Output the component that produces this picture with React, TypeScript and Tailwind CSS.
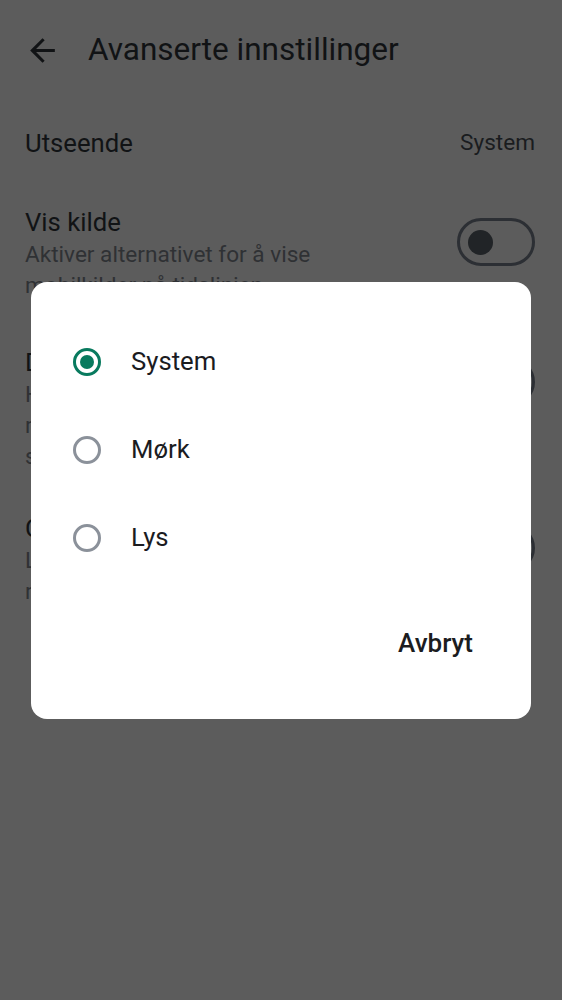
import React from 'react';

interface SettingItem {
  title: string;
  lines: string[];
  top: string;
}

const items: SettingItem[] = [
  {
    title: 'Vis kilde',
    lines: ['Aktiver alternativet for å vise', 'mobilkilder på tidslinjen'],
    top: 'mt-[21px]',
  },
  {
    title: 'Dobbel bekreftelse',
    lines: ['Hvis aktivert, må du bekrefte', 'registreringer før de lagres', 'side om side med tidslinjen'],
    top: 'mt-[46px]',
  },
  {
    title: 'Crash-rapporter',
    lines: ['La appen sende anonym bruk', 'rapporter til utviklerne'],
    top: 'mt-[41px]',
  },
];

const options = ['System', 'Mørk', 'Lys'];

function Toggle() {
  return (
    <div className="mt-[11px] flex h-[48px] w-[78px] shrink-0 items-center rounded-full border-[3px] border-[#2c2f34] pl-[8px]">
      <div className="h-[25px] w-[25px] rounded-full bg-[#212427]" />
    </div>
  );
}

function Radio({ checked }: { checked: boolean }) {
  return (
    <div
      className={`flex h-[28px] w-[28px] shrink-0 items-center justify-center rounded-full border-[3px] ${
        checked ? 'border-[#087a5e]' : 'border-[#8b919a]'
      }`}
    >
      {checked && <div className="h-[14px] w-[14px] rounded-full bg-[#087a5e]" />}
    </div>
  );
}

export default function App() {
  return (
    <div className="relative h-[1000px] overflow-hidden bg-[#5c5c5c] font-['Roboto',sans-serif] text-[#111315]">
      <header className="flex h-[100px] items-center gap-[27px] pl-[24px]">
        <svg width="37" height="37" viewBox="0 0 24 24" fill="#111315">
          <path d="M20 11H7.83l5.59-5.59L12 4l-8 8 8 8 1.41-1.41L7.83 13H20v-2z" />
        </svg>
        <h1 className="text-[31.5px] leading-none">Avanserte innstillinger</h1>
      </header>

      <div className="flex h-[86px] items-center justify-between pl-[25px] pr-[27px]">
        <span className="text-[25.7px]">Utseende</span>
        <span className="text-[22.6px] text-[#1a1c1f]">System</span>
      </div>

      {items.map((item) => (
        <div key={item.title} className={`${item.top} flex items-start justify-between pl-[25px] pr-[27px]`}>
          <div>
            <div className="text-[25.7px] leading-[30px]">{item.title}</div>
            <div className="mt-[2px] text-[22.6px] leading-[31px] text-[#2f3134]">
              {item.lines.map((line) => (
                <div key={line}>{line}</div>
              ))}
            </div>
          </div>
          <Toggle />
        </div>
      ))}

      <div className="absolute inset-0 flex items-center justify-center">
        <div className="h-[437px] w-[500px] rounded-[16px] bg-white pt-[36px]">
          {options.map((opt, i) => (
            <div key={opt} className="flex h-[88px] items-center gap-[30px] pl-[42px]">
              <Radio checked={i === 0} />
              <span className="text-[25.7px] text-[#1b1c1f]">{opt}</span>
            </div>
          ))}
          <div className="mt-[38px] flex justify-end pr-[46px]">
            <button className="h-[48px] px-3 text-[26px] font-medium text-[#1b1c1f]">Avbryt</button>
          </div>
        </div>
      </div>
    </div>
  );
}
